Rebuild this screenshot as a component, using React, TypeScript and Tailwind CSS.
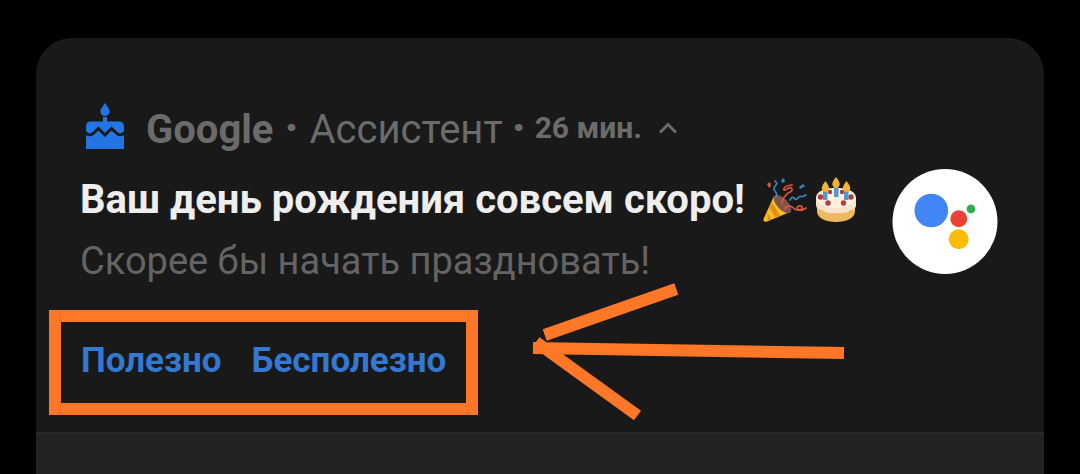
function CakeIcon() {
  return (
    <svg viewBox="0 0 38 46" className="h-[46px] w-[38px] shrink-0 fill-[#2275e3]" aria-hidden="true">
      <path d="M19 0 C21.5 3.6 23.6 6 23.6 8.500 A4.6 4.6 0 0 1 14.4 8.500 C14.4 6 16.5 3.6 19 0Z" />
      <path d="M17 14H21V18.5H33.5A4.500 4.500 0 0 1 38 23V28C35.5 31 33.5 31 31.5 29L25.5 23.5L19 30L12.500 23.500L6.500 29C4.500 31 2.500 31 0 28V23A4.500 4.500 0 0 1 4.500 18.500H17Z" />
      <path d="M0 32C3 34 6 33.500 8 31.500L12.500 27.500L19 34L25.500 27.500L30 31.500C32 33.500 35 34 38 32V46H0Z" />
    </svg>
  );
}

function PartyPopper() {
  return (
    <svg viewBox="0 0 44 44" className="size-11" role="img" aria-label="Хлопушка">
      <path d="M11 18L0.500 41Q0 44.500 4 43.500L27 34Z" fill="#f9bd25" />
      <path d="M8.500 24L17.500 38L13 40L6 29.500ZM4 34L8.500 41.500L5 43Z" fill="#e58f1b" />
      <ellipse cx="19.500" cy="26" rx="5.500" ry="11.500" transform="rotate(-43 19.500 26)" fill="#805348" />
      <g fill="none" strokeWidth="1.700" strokeLinecap="round">
        <path d="M13 19C16 15 10 13 11 10S16 6 12 3" stroke="#3686bd" />
        <path d="M19 26C19 20 22 18 25 15C32 13 29 7 24 11C20 15 18 8 29 7" stroke="#dc563d" />
        <path d="M27 22C31 15 31 25 35 20C38 16 37 21 43 17" stroke="#3686bd" />
        <path d="M21 31C27 24 30 31 34 32C40 33 41 27 36 28C31 30 37 35 43 30" stroke="#dc563d" />
      </g>
      <path d="M4 6L7 4L8 8L6 10Z" fill="#dc563d" />
      <path d="M18 2L21 0L22 4L19 5ZM36 9L40 6L42 8L37 11Z" fill="#3686bd" />
    </svg>
  );
}

function BirthdayCake() {
  return (
    <svg viewBox="0 0 42 46" className="h-[46px] w-[42px]" role="img" aria-label="Торт">
      <path d="M2 26V34C2 41.500 11 45 21 45S40 41.500 40 34V26Z" fill="#edb95f" />
      <path d="M1 21C1 14 10 11 21 11S41 14 41 21V29Q40 33 36 33Q34 33 33 35Q27 37 21 36Q14 37 10 35Q8 33 6 33Q1 32 1 28Z" fill="#f8e2cc" />
      <ellipse cx="21" cy="21" rx="19.500" ry="10" fill="#fff0df" />
      <g fill="#b93745">
        <circle cx="5.500" cy="20" r="2.700" /><circle cx="36" cy="20" r="2.700" />
        <circle cx="13" cy="26" r="2.700" /><circle cx="28.500" cy="26" r="2.700" />
        <circle cx="15" cy="15" r="2.200" /><circle cx="27" cy="15" r="2.200" />
      </g>
      <path d="M8 13H12.500V23H8ZM19 9H23.500V20H19ZM29 13H33.500V23H29Z" fill="#4d9cc5" />
      <path d="M10.500 4Q4.500 11 8 14Q10.500 16 13 14Q16 11 10.500 4ZM21 0Q15 7 18.500 10Q21 12 23.500 10Q27 7 21 0ZM31.500 4Q25.500 11 29 14Q31.500 16 34 14Q37.500 11 31.500 4Z" fill="#f4b32e" />
    </svg>
  );
}

function AssistantLogo() {
  return (
    <svg viewBox="0 0 106 106" className="size-[106px] shrink-0" role="img" aria-label="Google Ассистент">
      <circle cx="53" cy="52.500" r="52.500" fill="#fff" />
      <circle cx="39.300" cy="41.500" r="16.800" fill="#4285f4" />
      <circle cx="66.800" cy="49.700" r="8.500" fill="#ea4335" />
      <circle cx="79" cy="40" r="4.400" fill="#34a853" />
      <circle cx="66.700" cy="70.300" r="10" fill="#fbbc05" />
    </svg>
  );
}

function Arrow() {
  return (
    <svg
      viewBox="0 0 316 140"
      className="pointer-events-none absolute -top-3 left-[480px] h-[140px] w-[316px] overflow-visible stroke-[#ff7727]"
      strokeWidth="12"
      fill="none"
      aria-hidden="true"
    >
      <path d="M147.300 10L15.700 56M4 69L315 74M7 63L108.500 136.500" />
    </svg>
  );
}

export default function App() {
  return (
    <main className="flex min-h-screen flex-col bg-black px-9 pt-[38px] font-['Roboto',sans-serif]">
      <article className="rounded-t-[36px] bg-[#191919] px-11 pt-16 pb-[17px]">
        <header className="flex h-12 items-center whitespace-nowrap text-[#6b6b6b]">
          <div className="pr-[22px] pl-[6px]">
            <CakeIcon />
          </div>
          <h1 className="pt-2 text-[40px] leading-[52px] font-bold">Google</h1>
          <span className="w-9 pt-1 text-center text-[48px] leading-[52px] font-bold">·</span>
          <span className="pt-2 text-[40px] leading-[52px]">Ассистент</span>
          <span className="w-8 pt-1 text-center text-[48px] leading-[52px] font-bold">·</span>
          <time className="pt-[2px] text-[30px] font-bold">26 мин.</time>
          <button type="button" aria-label="Свернуть" className="ml-4 pt-1">
            <svg viewBox="0 0 20 12" className="h-3 w-5 fill-none stroke-[#6b6b6b]" strokeWidth="3">
              <path d="M2 10.500L10 2.500L18 10.500" />
            </svg>
          </button>
        </header>
        <div className="flex items-start justify-between pt-[19px] pr-[2px]">
          <div className="whitespace-nowrap">
            <h2 className="flex h-[62px] items-center text-[40px] font-bold text-[#eeeeee]">
              Ваш день рождения совсем скоро!
              <span className="ml-[18px] flex items-center gap-2">
                <PartyPopper />
                <BirthdayCake />
              </span>
            </h2>
            <p className="text-[38px] leading-[60px] text-[#646464]">Скорее бы начать праздновать!</p>
          </div>
          <AssistantLogo />
        </div>
        <div className="relative -ml-[31px] pt-[19px]">
          <div className="flex h-[105px] w-fit items-center gap-[30px] border-12 border-[#ff7727] px-5 pb-[2px] text-[35px] font-bold text-[#3478d1]">
            <button type="button">Полезно</button>
            <button type="button">Бесполезно</button>
          </div>
          <Arrow />
        </div>
      </article>
      <footer className="min-h-[42px] flex-1 border-t-2 border-[#282828] bg-[#222224]" />
    </main>
  );
}
